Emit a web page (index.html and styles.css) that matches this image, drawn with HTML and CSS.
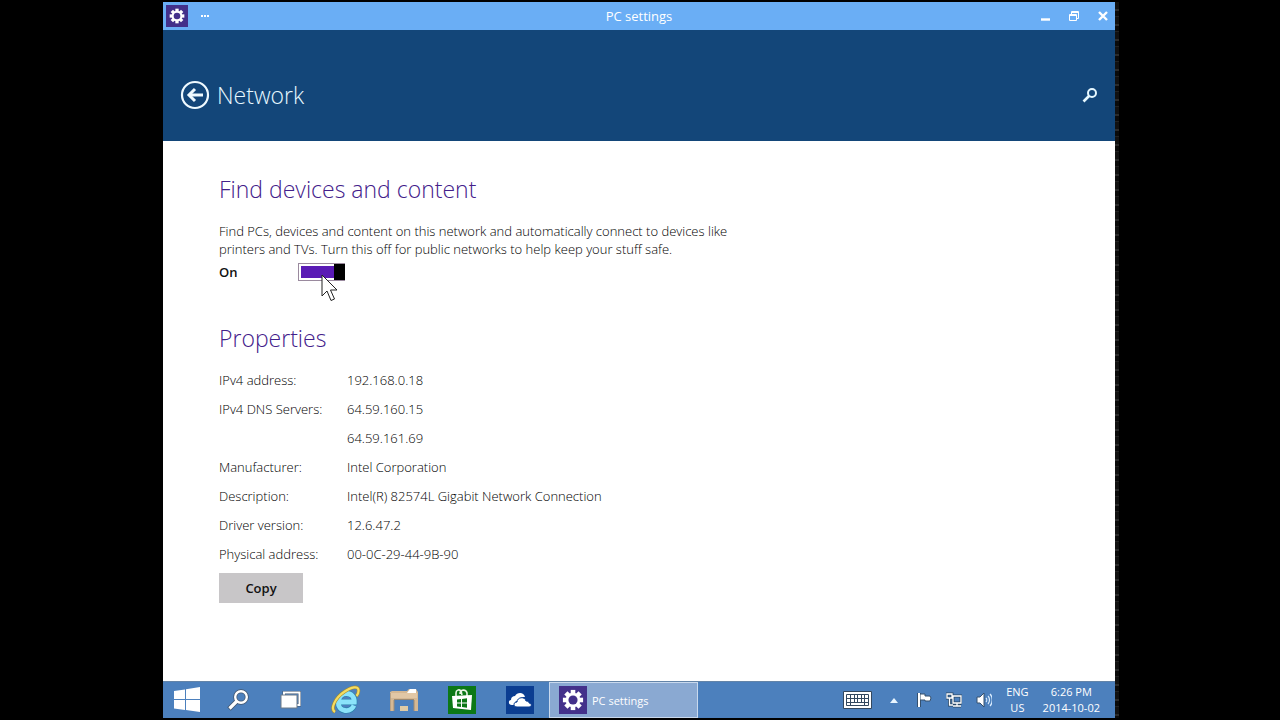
FILE: index.html
```html
<!DOCTYPE html>
<html lang="en">
<head>
    <meta charset="UTF-8">
    <meta name="viewport" content="width=device-width, initial-scale=1.0">
    <title>PC settings</title>
    <link rel="stylesheet" href="styles.css">
</head>
<body>
    <!-- Gear shape shared by the title bar and the taskbar -->
    <svg class="defs" aria-hidden="true">
        <symbol id="gear" viewBox="0 0 24 24">
            <g fill="#fff">
                <rect x="9.5" y="1" width="5" height="22"/>
                <rect x="9.5" y="1" width="5" height="22" transform="rotate(45 12 12)"/>
                <rect x="9.5" y="1" width="5" height="22" transform="rotate(90 12 12)"/>
                <rect x="9.5" y="1" width="5" height="22" transform="rotate(135 12 12)"/>
                <circle cx="12" cy="12" r="8"/>
            </g>
            <circle cx="12" cy="12" r="5" fill="#43308a"/>
        </symbol>
    </svg>

    <div class="desktop">
        <!-- Title bar -->
        <header class="titlebar">
            <div class="titlebar-left">
                <svg class="app-icon" width="22" height="22" viewBox="0 0 22 22"><rect width="22" height="22" fill="#43308a"/><use href="#gear" x="3" y="3" width="16" height="16"/></svg>
                <button class="dots" aria-label="App commands">
                    <svg width="8" height="2" viewBox="0 0 8 2" fill="#fff"><path d="M0 0h2v2H0zM3 0h2v2H3zM6 0h2v2H6z"/></svg>
                </button>
            </div>
            <h1>PC settings</h1>
            <div class="window-buttons">
                <button aria-label="Minimize"><svg width="12" height="12" viewBox="0 0 12 12"><path d="M2 9.500h9" stroke="#fff" stroke-width="2.400"/></svg></button>
                <button aria-label="Restore"><svg width="12" height="12" viewBox="0 0 12 12" fill="none" stroke="#fff"><path d="M1.500 4.500h7v6h-7zM1.500 5.500h7M3.500 4V1.500h7v7H9M3.500 2.500h7"/></svg></button>
                <button aria-label="Close"><svg width="12" height="12" viewBox="0 0 12 12"><path d="M2 2l8 8M10 2l-8 8" stroke="#fff" stroke-width="2.400"/></svg></button>
            </div>
        </header>

        <!-- Page header -->
        <div class="page-header">
            <button aria-label="Back">
                <svg width="30" height="30" viewBox="0 0 30 30" fill="none" stroke="#effaff"><circle cx="15" cy="15" r="13" stroke-width="2.200"/><path d="M23 15H10" stroke-width="3"/><path d="M15 9l-6 6 6 6" stroke-width="3"/></svg>
            </button>
            <h2>Network</h2>
            <button class="search" aria-label="Search">
                <svg width="16" height="16" viewBox="0 0 16 16" fill="none" stroke="#e6f8ff"><circle cx="10" cy="6" r="4" stroke-width="2"/><path d="M7 9l-5.500 5.500" stroke-width="2.600"/></svg>
            </button>
        </div>

        <!-- Settings -->
        <main>
            <h3>Find devices and content</h3>
            <p>Find PCs, devices and content on this network and automatically connect to devices like<br>printers and TVs. Turn this off for public networks to help keep your stuff safe.</p>
            <div class="toggle-row">
                <label for="discovery">On</label>
                <div class="toggle-wrap">
                    <input class="toggle" type="checkbox" id="discovery" checked>
                    <svg class="cursor" width="18" height="28" viewBox="0 0 18 28"><path d="M1 1v21l5-5 4 9.500 3.500-1.500-4-9h6.500z" fill="#fff" stroke="#222"/></svg>
                </div>
            </div>

            <h3>Properties</h3>
            <table>
                <tr><th scope="row">IPv4 address:</th><td>192.168.0.18</td></tr>
                <tr><th scope="row">IPv4 DNS Servers:</th><td>64.59.160.15</td></tr>
                <tr><th></th><td>64.59.161.69</td></tr>
                <tr><th scope="row">Manufacturer:</th><td>Intel Corporation</td></tr>
                <tr><th scope="row">Description:</th><td>Intel(R) 82574L Gigabit Network Connection</td></tr>
                <tr><th scope="row">Driver version:</th><td>12.6.47.2</td></tr>
                <tr><th scope="row">Physical address:</th><td>00-0C-29-44-9B-90</td></tr>
            </table>
            <button class="copy">Copy</button>
        </main>

        <!-- Taskbar -->
        <footer class="taskbar">
            <button class="start" aria-label="Start">
                <svg width="26" height="26" viewBox="0 0 26 26" fill="#fff"><path d="M0 4l11-1.500V12H0zM12 2.300L26 0v12H12zM0 13h11v10L0 21.500zM12 13h14v12l-14-2z"/></svg>
            </button>
            <button class="find" aria-label="Search">
                <svg width="22" height="22" viewBox="0 0 22 22" fill="none"><path d="M10 12l-8 8" stroke="#40556e" stroke-width="5"/><circle cx="14" cy="8" r="5.800" stroke="#40556e" stroke-width="4"/><path d="M10 12l-7.500 7.500" stroke="#fff" stroke-width="3.200"/><circle cx="14" cy="8" r="5.800" stroke="#fff" stroke-width="2.400"/></svg>
            </button>
            <button class="view" aria-label="Task view">
                <svg width="22" height="18" viewBox="0 0 22 18"><path d="M4 4V1.500h15.500V14H17" fill="none" stroke="#40556e" stroke-width="3"/><path d="M4 4V1.500h15.500V14H17" fill="none" stroke="#fff" stroke-width="2"/><path d="M1 4h16v13H1z" fill="#fff" stroke="#6d7a88"/></svg>
            </button>
            <button aria-label="Internet Explorer">
                <svg width="30" height="30" viewBox="0 0 30 30" fill="none"><path d="M23 20.500c-2 4-5 5.500-9 5C9.500 25 7 21.500 7.300 16.500 7.800 11.500 11 8.500 15.500 8.500c5 0 8 3.500 7.800 8.500H9" stroke="#267da8" stroke-width="6"/><path d="M23 20.500c-2 4-5 5.500-9 5C9.500 25 7 21.500 7.300 16.500 7.800 11.500 11 8.500 15.500 8.500c5 0 8 3.500 7.800 8.500H9" stroke="#8be3fa" stroke-width="4.800"/><path d="M4 27C-1 24 4 13 13 7 20 2 28 0 27.500 6c0 2-1 4-2 5" stroke="#a58b2f" stroke-width="3.400"/><path d="M4 27C-1 24 4 13 13 7 20 2 28 0 27.500 6c0 2-1 4-2 5" stroke="#f5dc62" stroke-width="2.200"/></svg>
            </button>
            <button aria-label="File Explorer">
                <svg width="28" height="24" viewBox="0 0 28 24"><path d="M0 4l2-1h15l2-2h7l2 3v19h-4V12H4v11H0z" fill="#d5b894"/><path d="M17 5l3-4h6v4z" fill="#fff"/><path d="M1 5h26v5H1z" fill="#e2c7a5"/><path d="M10 18h8v5h-8z" fill="#dfcba6"/><path d="M0 5v18M4 12v11M24 12v11M4 11.500h20" stroke="#9c8a74"/></svg>
            </button>
            <button aria-label="Store">
                <svg width="28" height="28" viewBox="0 0 28 28"><path d="M0 0h28v28H0z" fill="#0c7816"/><path d="M8 10V7c0-3 3-4 5-2l1 4M12 8c0-5 6-5 7-1v3" fill="none" stroke="#e8f5e4" stroke-width="1.600"/><path d="M4 10l20-1-1 15-18-2z" fill="#fff"/><path d="M9 13.500l4-.5v3.500H9zM14 12.900l5-.6v4.200h-5zM9 17.500h4V21l-4-.5zM14 17.500h5v4.200l-5-.6z" fill="#0c7816"/></svg>
            </button>
            <button aria-label="OneDrive">
                <svg width="28" height="28" viewBox="0 0 28 28"><path d="M0 0h28v28H0z" fill="#0b3d91"/><path d="M6 19c-4 0-4-5-1-5 0-3 2-4 4-4 2-4 9-4 10 1-4 0-6 1-7 4-3 0-4 2-4 4z" fill="#fff"/><path d="M11 21c-4 0-4-5 0-5 0-5 8-6 9-1 3 0 3 2 3 2 3 0 3 4 0 4z" fill="#fff" stroke="#0b3d91"/></svg>
            </button>
            <button class="task">
                <svg width="28" height="28" viewBox="0 0 28 28"><rect width="28" height="28" fill="#43308a"/><use href="#gear" x="3" y="3" width="22" height="22"/></svg>
                PC settings
            </button>

            <div class="tray">
                <button aria-label="Touch keyboard">
                    <svg width="29" height="18" viewBox="0 0 29 18"><path d="M.5.5h28v17H.5z" fill="#fff" stroke="#33485f"/><path d="M3.500 3.500h22v11h-22zM3.500 7.500h22M3.500 11.500h22M7.500 3.500v11M11.500 3.500v8M14.500 3.500v8M18.500 3.500v8M21.500 3.500v11" fill="none" stroke="#33485f"/></svg>
                </button>
                <button class="more" aria-label="Show hidden icons">
                    <svg width="8" height="5" viewBox="0 0 8 5"><path d="M4 0l4 5H0z" fill="#eaf6ff"/></svg>
                </button>
                <button aria-label="Action Center">
                    <svg width="16" height="16" viewBox="0 0 16 16"><path d="M3 1v14" stroke="#35506e" stroke-width="4"/><path d="M4 2h5v2h5l1 2-1 3H9V8H4z" fill="#fff" stroke="#35506e"/><path d="M3 1v14" stroke="#fff" stroke-width="2"/></svg>
                </button>
                <button aria-label="Network status">
                    <svg width="16" height="16" viewBox="0 0 16 16" fill="none"><path d="M7 4h8v7H7zM11 11v3M7 14h8M1 2h5v4H1zM3.500 6v7H7" stroke="#294969" stroke-width="3"/><path d="M7 4h8v7H7zM11 11v3M7 14h8M1 2h5v4H1zM3.500 6v7H7" stroke="#fff" stroke-width="1.300"/></svg>
                </button>
                <button aria-label="Volume">
                    <svg width="16" height="16" viewBox="0 0 16 16" fill="none"><path d="M1 5h3l4-4v14l-4-4H1z" fill="#fff" stroke="#35506e"/><path d="M10 6c1 1 1 3 0 4M12 4c2 2 2 6 0 8M14 2c3 3 3 9 0 12" stroke="#dceeff" stroke-width="1.200"/></svg>
                </button>
                <button class="lang">ENG<br>US</button>
                <button class="clock">6:26 PM<br>2014-10-02</button>
            </div>
        </footer>
    </div>
    <div class="edge"></div>
</body>
</html>
```
FILE: styles.css
```css
/* General Styles */
* {
    box-sizing: border-box;
}

body {
    margin: 0;
    padding: 2px 161px 2px 163px;
    min-height: 100vh;
    display: flex;
    background: #000;
    color: #000;
    font-family: "Open Sans", "Noto Sans", sans-serif;
    font-size: 13px;
}

h1, h2, h3, p {
    margin: 0;
    font-weight: normal;
}

button {
    display: flex;
    align-items: center;
    justify-content: center;
    margin: 0;
    padding: 0;
    border: none;
    background: none;
    color: inherit;
    font: inherit;
}

svg {
    display: block;
    flex: none;
}

.defs {
    position: absolute;
    width: 0;
    height: 0;
}

.desktop {
    flex: 1;
    display: flex;
    flex-direction: column;
    background: #fff;
}

.edge {
    width: 4px;
    background: repeating-linear-gradient(#111 0 7px, #2b2b2b 7px 9px, #0a0a0a 9px 14px, #222 14px 15px);
}

/* Title bar */
.titlebar {
    display: grid;
    grid-template-columns: 1fr auto 1fr;
    align-items: center;
    height: 28px;
    padding: 0 3px;
    background: #6aaef5;
    color: #fff;
}

.titlebar h1 {
    font-size: 13px;
}

.titlebar-left {
    display: flex;
    align-items: center;
    gap: 13px;
}

.window-buttons {
    display: flex;
    justify-content: flex-end;
    gap: 17px;
    padding-right: 3px;
}

/* Page header */
.page-header {
    display: flex;
    align-items: center;
    gap: 7px;
    height: 111px;
    padding: 18px 17px 0;
    background: #134679;
    color: #e6f8ff;
}

.page-header h2 {
    font-size: 23px;
    font-weight: 300;
}

.search {
    margin-left: auto;
}

/* Settings */
main {
    flex: 1;
    padding: 32px 56px 0;
}

h3 {
    color: #43208a;
    font-size: 23px;
    font-weight: 300;
    line-height: 32px;
}

main p {
    margin-top: 17px;
    font-weight: 350;
    line-height: 18px;
}

.toggle-row {
    display: flex;
    align-items: center;
    height: 18px;
    margin: 5px 0 41px;
}

.toggle-row label {
    width: 79px;
    color: #111;
    font-weight: 600;
}

.toggle-wrap {
    position: relative;
    height: 18px;
}

.toggle {
    display: block;
    appearance: none;
    width: 47px;
    height: 18px;
    margin: 0;
    border: 1px solid #9a8a9e;
    border-right-width: 0;
    background: linear-gradient(to left, #000 11px, transparent 11px), linear-gradient(#5a1bb5, #5a1bb5) content-box;
    padding: 2px 0 2px 2px;
}

.cursor {
    position: absolute;
    left: 23px;
    top: 11px;
}

table {
    margin-top: 11px;
    border-collapse: collapse;
}

th, td {
    height: 29px;
    padding: 0;
    font-weight: 350;
    text-align: left;
}

th {
    width: 128px;
}

.copy {
    width: 84px;
    height: 30px;
    margin-top: 5px;
    background: #c8c6c8;
    color: #111;
    font-weight: 600;
}

/* Taskbar */
.taskbar {
    display: flex;
    height: 37px;
    border-top: 1px solid #6384a8;
    background: #4c80bd;
    color: #fff;
    font-size: 11px;
}

.taskbar > button {
    width: 58px;
}

.taskbar > .start {
    width: 48px;
}

.taskbar > .find {
    width: 54px;
}

.taskbar > .view {
    width: 52px;
}

.taskbar > .task {
    width: 149px;
    justify-content: flex-start;
    gap: 5px;
    padding-left: 9px;
    border: 1px solid #c9d9ed;
    background: #8aa9d2;
}

.tray {
    display: flex;
    align-items: center;
    gap: 14px;
    margin-left: auto;
    padding-right: 15px;
    line-height: 16px;
}

.more {
    width: 16px;
}
```
